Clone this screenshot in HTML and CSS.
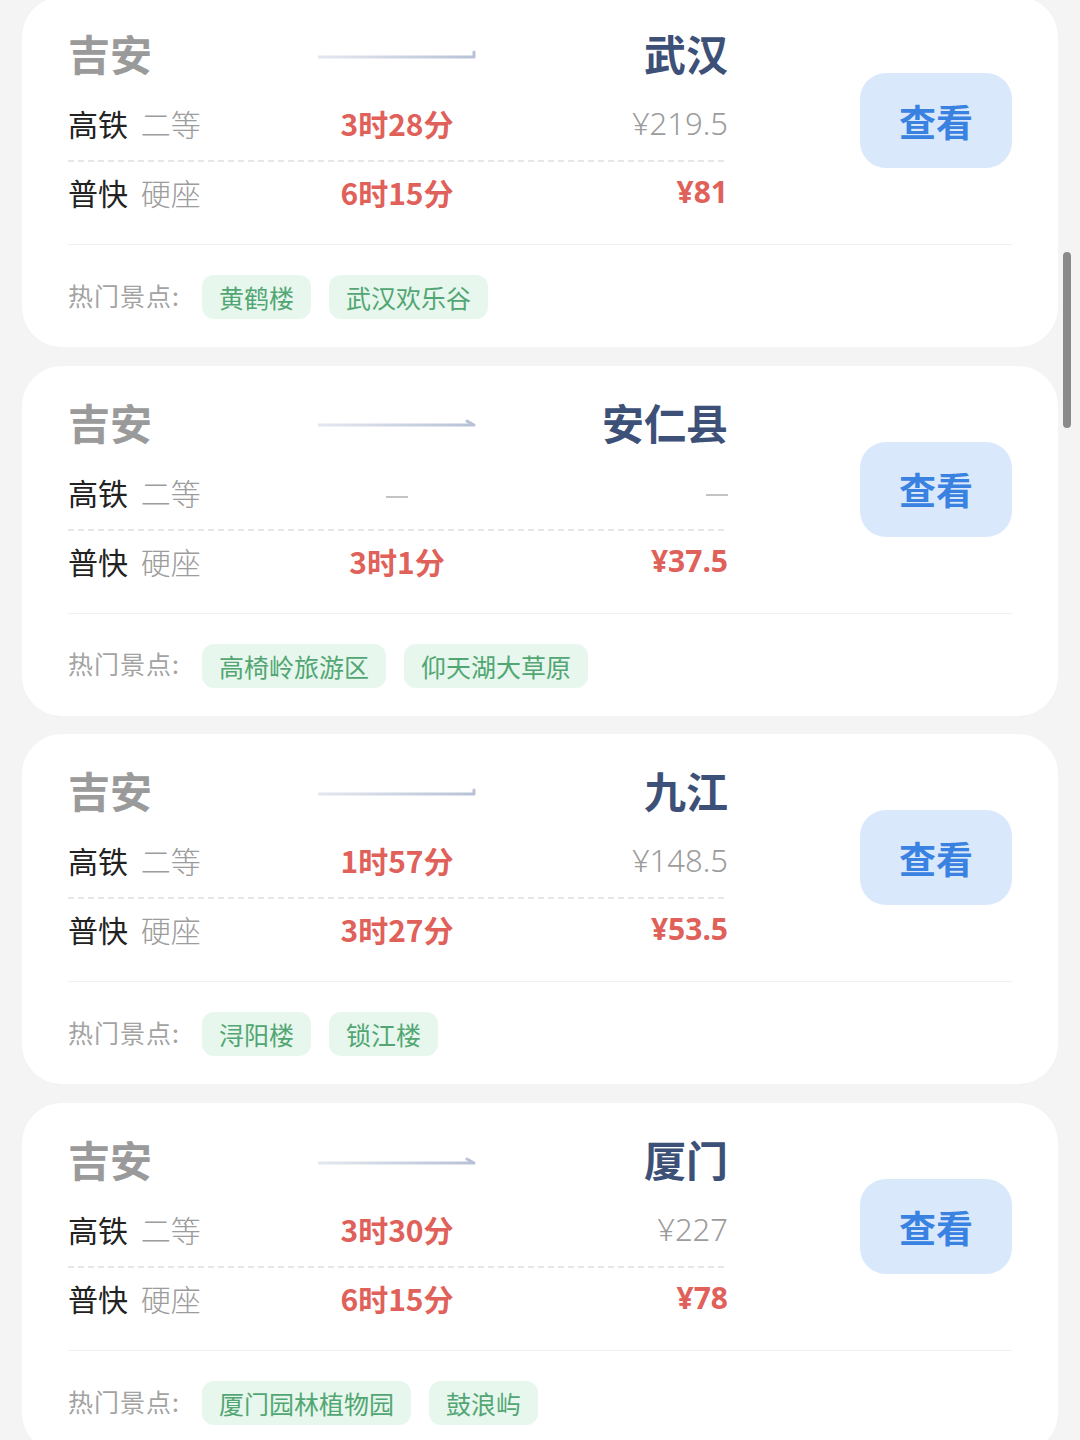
FILE: index.html
```html
<!DOCTYPE html>
<html lang="zh-CN">
<head>
  <meta charset="UTF-8">
  <title>吉安出发</title>
  <link rel="stylesheet" href="styles.css">
</head>
<body>
  <div class="list">

    <div class="card">
      <div class="top">
        <div class="main">
          <div class="grid route">
            <span class="from">吉安</span>
            <span class="arrow"><svg width="158" height="12" viewBox="0 0 158 12"><defs><linearGradient id="g1" x1="0" x2="1"><stop offset="0" stop-color="#e3e7ef"/><stop offset="1" stop-color="#b8c1d6"/></linearGradient></defs><path d="M1 9 H156 V4" fill="none" stroke="url(#g1)" stroke-width="3" stroke-linecap="round" stroke-linejoin="round"/></svg></span>
            <span class="to">武汉</span>
          </div>
          <div class="grid row">
            <span class="kind">高铁 <em>二等</em></span>
            <span class="time">3时28分</span>
            <span class="price">¥219.5</span>
          </div>
          <div class="dash"></div>
          <div class="grid row row2">
            <span class="kind">普快 <em>硬座</em></span>
            <span class="time">6时15分</span>
            <span class="price hot">¥81</span>
          </div>
        </div>
        <button class="look">查看</button>
      </div>
      <div class="sep"></div>
      <div class="spots">
        <span class="label">热门景点:</span>
        <span class="tag">黄鹤楼</span>
        <span class="tag">武汉欢乐谷</span>
      </div>
    </div>

    <div class="card">
      <div class="top">
        <div class="main">
          <div class="grid route">
            <span class="from">吉安</span>
            <span class="arrow"><svg width="158" height="12" viewBox="0 0 158 12"><defs><linearGradient id="g2" x1="0" x2="1"><stop offset="0" stop-color="#e3e7ef"/><stop offset="1" stop-color="#b8c1d6"/></linearGradient></defs><path d="M1 9 H156 L149 5" fill="none" stroke="url(#g2)" stroke-width="3" stroke-linecap="round" stroke-linejoin="round"/></svg></span>
            <span class="to">安仁县</span>
          </div>
          <div class="grid row">
            <span class="kind">高铁 <em>二等</em></span>
            <span class="time"><i class="none"></i></span>
            <span class="price"><i class="none"></i></span>
          </div>
          <div class="dash"></div>
          <div class="grid row row2">
            <span class="kind">普快 <em>硬座</em></span>
            <span class="time">3时1分</span>
            <span class="price hot">¥37.5</span>
          </div>
        </div>
        <button class="look">查看</button>
      </div>
      <div class="sep"></div>
      <div class="spots">
        <span class="label">热门景点:</span>
        <span class="tag">高椅岭旅游区</span>
        <span class="tag">仰天湖大草原</span>
      </div>
    </div>

    <div class="card">
      <div class="top">
        <div class="main">
          <div class="grid route">
            <span class="from">吉安</span>
            <span class="arrow"><svg width="158" height="12" viewBox="0 0 158 12"><defs><linearGradient id="g3" x1="0" x2="1"><stop offset="0" stop-color="#e3e7ef"/><stop offset="1" stop-color="#b8c1d6"/></linearGradient></defs><path d="M1 9 H156 V5" fill="none" stroke="url(#g3)" stroke-width="3" stroke-linecap="round" stroke-linejoin="round"/></svg></span>
            <span class="to">九江</span>
          </div>
          <div class="grid row">
            <span class="kind">高铁 <em>二等</em></span>
            <span class="time">1时57分</span>
            <span class="price">¥148.5</span>
          </div>
          <div class="dash"></div>
          <div class="grid row row2">
            <span class="kind">普快 <em>硬座</em></span>
            <span class="time">3时27分</span>
            <span class="price hot">¥53.5</span>
          </div>
        </div>
        <button class="look">查看</button>
      </div>
      <div class="sep"></div>
      <div class="spots">
        <span class="label">热门景点:</span>
        <span class="tag">浔阳楼</span>
        <span class="tag">锁江楼</span>
      </div>
    </div>

    <div class="card">
      <div class="top">
        <div class="main">
          <div class="grid route">
            <span class="from">吉安</span>
            <span class="arrow"><svg width="158" height="12" viewBox="0 0 158 12"><defs><linearGradient id="g4" x1="0" x2="1"><stop offset="0" stop-color="#e3e7ef"/><stop offset="1" stop-color="#b8c1d6"/></linearGradient></defs><path d="M1 9 H156 L149 5" fill="none" stroke="url(#g4)" stroke-width="3" stroke-linecap="round" stroke-linejoin="round"/></svg></span>
            <span class="to">厦门</span>
          </div>
          <div class="grid row">
            <span class="kind">高铁 <em>二等</em></span>
            <span class="time">3时30分</span>
            <span class="price">¥227</span>
          </div>
          <div class="dash"></div>
          <div class="grid row row2">
            <span class="kind">普快 <em>硬座</em></span>
            <span class="time">6时15分</span>
            <span class="price hot">¥78</span>
          </div>
        </div>
        <button class="look">查看</button>
      </div>
      <div class="sep"></div>
      <div class="spots">
        <span class="label">热门景点:</span>
        <span class="tag">厦门园林植物园</span>
        <span class="tag">鼓浪屿</span>
      </div>
    </div>

  </div>
  <div class="scrollbar"></div>
</body>
</html>
```

FILE: styles.css
```css
body { margin: 0; background: #f4f4f4; font-family: "Noto Sans CJK SC", "Noto Sans", sans-serif; overflow: hidden; }
.list { padding: 0 22px; margin-top: -3px; }
.card { background: #fff; border-radius: 40px; padding: 28px 46px 28px; margin-bottom: 18.7px; }

.top { display: flex; align-items: flex-start; }
.main { width: 660px; }
.grid { display: grid; grid-template-columns: 200px 258px 202px; align-items: center; }
.route { height: 56px; }
.from { font-size: 42px; font-weight: 700; color: #9a9a9a; line-height: 56px; }
.arrow { display: flex; justify-content: center; padding-top: 1px; }
.arrow svg { display: block; }
.to { font-size: 42px; font-weight: 700; color: #3d5077; text-align: right; line-height: 56px; }

.row { height: 50px; margin-top: 17px; margin-bottom: 12px; font-size: 30px; line-height: 50px; }
.row2 { margin-top: 5px; margin-bottom: 0; }
.kind { color: #222; }
.kind em { font-style: normal; color: #9c9c9c; font-weight: 300; margin-left: 6px; }
.time { text-align: center; color: #e0605a; font-weight: 700; }
.price { text-align: right; color: #9c9c9c; font-weight: 300; font-family: "Noto Sans", sans-serif; font-size: 31px; }
.price.hot { color: #e0605a; font-weight: 700; font-size: 30px; }
.none { display: inline-block; width: 22px; height: 2px; background: #c4c4c4; vertical-align: middle; }

.dash { height: 2px; width: 660px; background: repeating-linear-gradient(90deg, #e6e6e6 0 6px, transparent 6px 10px); }

.look { margin-left: auto; margin-top: 48px; width: 152px; height: 95px; border: none; border-radius: 26px; background: #d9e9fb; color: #3a82e2; font-family: inherit; font-size: 37px; font-weight: 700; cursor: pointer; }

.sep { height: 1px; background: #f0f0f0; margin-top: 27px; }

.spots { display: flex; align-items: center; margin-top: 30px; height: 44px; }
.label { font-size: 25px; color: #a3a3a3; margin-right: 22px; margin-bottom: 5px; letter-spacing: 1px; }
.tag { height: 44px; line-height: 44px; padding: 0 17px; border-radius: 12px; background: #e7f7ed; color: #52a673; font-size: 25px; margin-right: 18px; }

.scrollbar { position: fixed; left: 1063px; top: 252px; width: 8px; height: 176px; border-radius: 4px; background: #8a8a8a; }
```
